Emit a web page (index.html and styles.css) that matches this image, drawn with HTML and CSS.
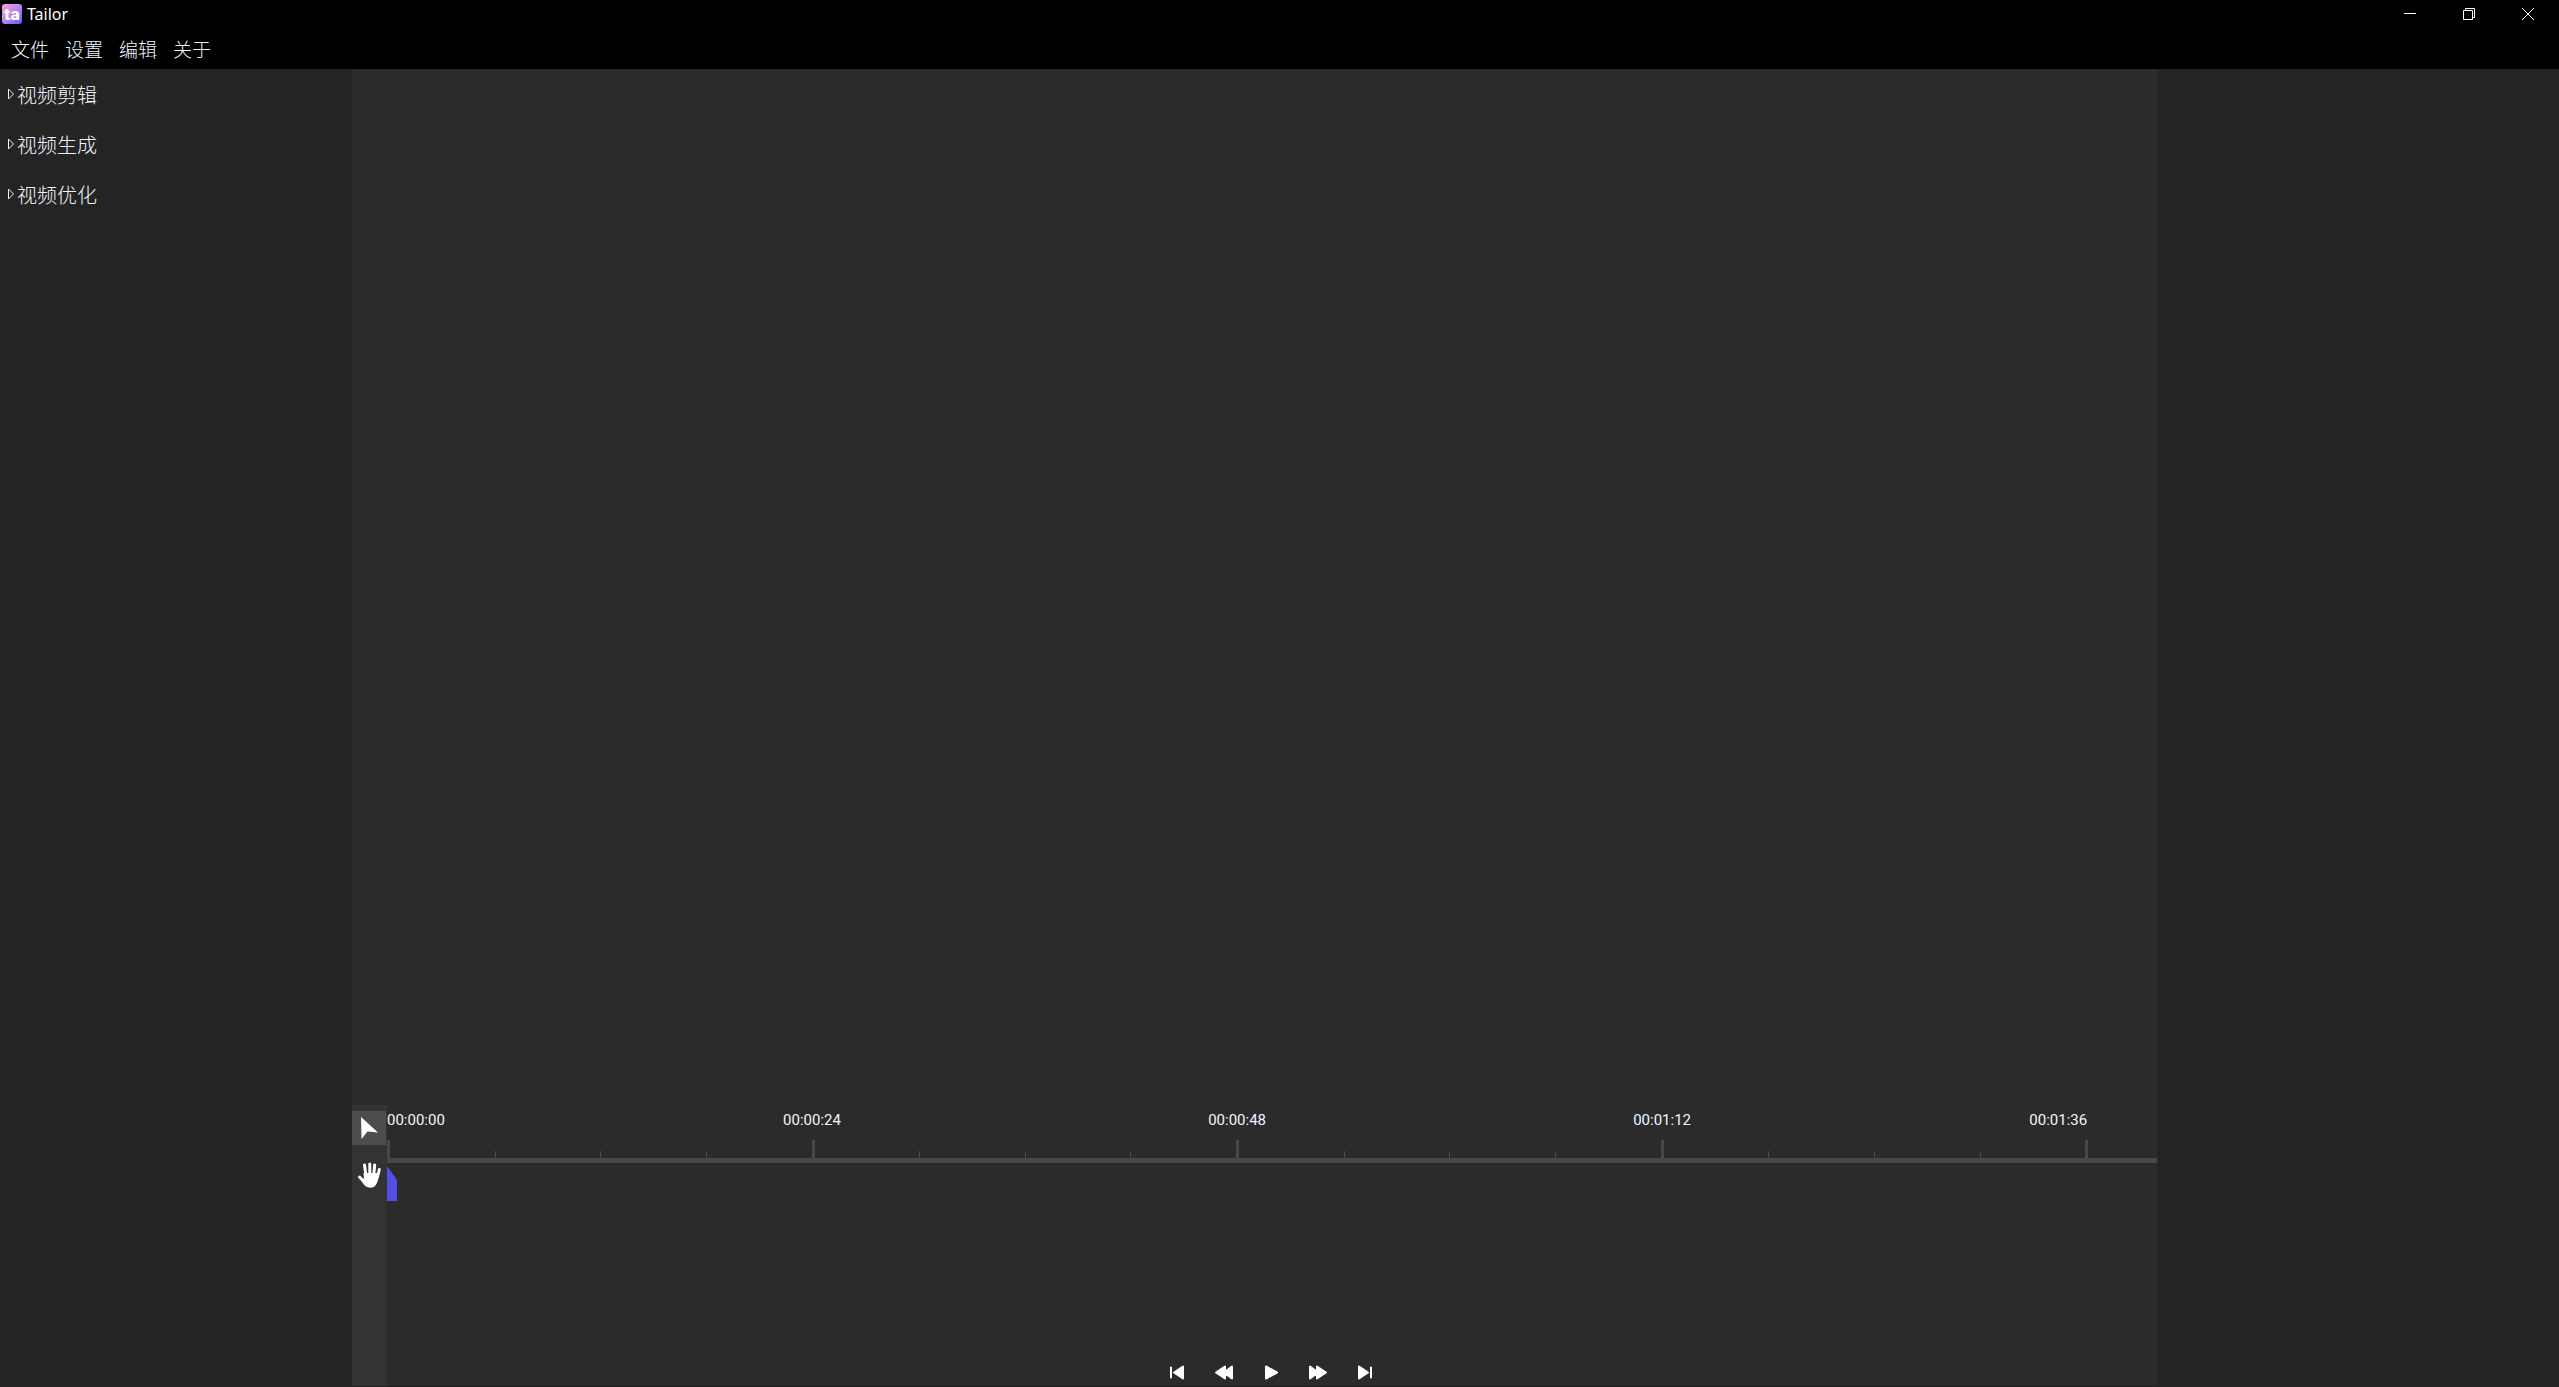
FILE: index.html
```
<!DOCTYPE html>
<html lang="zh-CN">
<head>
    <meta charset="UTF-8">
    <meta name="viewport" content="width=device-width, initial-scale=1.0">
    <title>Tailor</title>
    <link rel="stylesheet" href="styles.css">
</head>
<body>
    <header>
        <div class="title-bar">
            <svg class="logo" viewBox="0 0 20 20">
                <defs>
                    <linearGradient id="logo-bg" x1="0" y1="0" x2="1" y2="1">
                        <stop offset="0" stop-color="#ff9ddf"/>
                        <stop offset="0.5" stop-color="#b886f2"/>
                        <stop offset="1" stop-color="#5a5cf0"/>
                    </linearGradient>
                </defs>
                <rect width="20" height="20" rx="3" fill="url(#logo-bg)"/>
                <text x="10" y="16" text-anchor="middle">ta</text>
            </svg>
            <span class="app-name">Tailor</span>
            <div class="window-buttons">
                <button aria-label="最小化">
                    <svg width="12" height="12" viewBox="0 0 12 12"><path d="M0 5.5h12"/></svg>
                </button>
                <button aria-label="还原">
                    <svg width="12" height="12" viewBox="0 0 12 12"><path d="M.5 2.5h9v9h-9zM2.500 2.500v-2h9v9h-2"/></svg>
                </button>
                <button aria-label="关闭">
                    <svg width="12" height="12" viewBox="0 0 12 12"><path d="M0 0l12 12M12 0L0 12"/></svg>
                </button>
            </div>
        </div>
        <nav class="menu-bar">
            <button>文件</button>
            <button>设置</button>
            <button>编辑</button>
            <button>关于</button>
        </nav>
    </header>

    <main>
        <!-- 功能列表 -->
        <aside class="sidebar">
            <details>
                <summary><svg width="6" height="12" viewBox="0 0 6 12"><path d="M.5 1v10l5-5z"/></svg>视频剪辑</summary>
            </details>
            <details>
                <summary><svg width="6" height="12" viewBox="0 0 6 12"><path d="M.5 1v10l5-5z"/></svg>视频生成</summary>
            </details>
            <details>
                <summary><svg width="6" height="12" viewBox="0 0 6 12"><path d="M.5 1v10l5-5z"/></svg>视频优化</summary>
            </details>
        </aside>

        <section class="workspace">
            <div class="preview"></div>

            <div class="editor">
                <div class="tools">
                    <button class="active" aria-label="选择">
                        <svg width="34" height="34" viewBox="0 0 34 34"><path d="M9 6l17 15.500-10.500-1L9.500 28z"/></svg>
                    </button>
                    <button aria-label="拖动">
                        <svg width="34" height="34" viewBox="0 0 34 34">
                            <path class="fingers" d="M12.500 7l1.500 11M17.800 6v11M22.700 7l-1 10M27.300 11.500l-2 8M7.500 19l5 5"/>
                            <path d="M11.500 15h13.500l1.500 4c-.5 4-1.500 7-4 9.500-1.500 1.500-6.500 1.500-8.500 0-2.500-2-4-4.500-5.500-7l3.500-1z"/>
                        </svg>
                    </button>
                </div>

                <!-- 时间轴 -->
                <div class="timeline">
                    <div class="time-labels">
                        <span>00:00:00</span>
                        <span>00:00:24</span>
                        <span>00:00:48</span>
                        <span>00:01:12</span>
                        <span>00:01:36</span>
                    </div>
                    <div class="ruler">
                        <i class="major"></i><i></i><i></i><i></i>
                        <i class="major"></i><i></i><i></i><i></i>
                        <i class="major"></i><i></i><i></i><i></i>
                        <i class="major"></i><i></i><i></i><i></i>
                        <i class="major last"></i>
                    </div>
                    <div class="playhead"></div>
                    <div class="controls">
                        <button aria-label="开头">
                            <svg width="20" height="20" viewBox="0 0 20 20"><path d="M4 4.500v10M16 3.500v12L7 9.500z"/></svg>
                        </button>
                        <button aria-label="快退">
                            <svg width="20" height="20" viewBox="0 0 20 20"><path d="M11 3.500v12L2 9.500zM18 3.500v12L10 9.500z"/></svg>
                        </button>
                        <button aria-label="播放">
                            <svg width="20" height="20" viewBox="0 0 20 20"><path d="M5 3.500v12l11-6z"/></svg>
                        </button>
                        <button aria-label="快进">
                            <svg width="20" height="20" viewBox="0 0 20 20"><path d="M2 3.500v12l8-6zM9 3.500v12l9-6z"/></svg>
                        </button>
                        <button aria-label="结尾">
                            <svg width="20" height="20" viewBox="0 0 20 20"><path d="M4 3.500v12l9-6zM16 4.500v10"/></svg>
                        </button>
                    </div>
                </div>
            </div>
        </section>

        <aside class="properties"></aside>
    </main>
</body>
</html>
```
FILE: styles.css
```
* {
    box-sizing: border-box;
}

body {
    display: flex;
    flex-direction: column;
    height: 100vh;
    margin: 0;
    background-color: #242424;
    color: #f0f5fc;
    font-family: "Noto Sans", "Noto Sans CJK SC", sans-serif;
    overflow: hidden;
}

button {
    padding: 0;
    border: none;
    background: none;
    color: inherit;
    font-family: inherit;
}

svg {
    display: block;
    flex: none;
}

header {
    background-color: #000000;
}

.title-bar {
    display: flex;
    align-items: center;
    height: 28px;
    padding: 0 2px;
}

.logo {
    width: 20px;
    height: 20px;
}

.logo text {
    font: 800 16px Inter, sans-serif;
    fill: #ffffff;
}

.app-name {
    margin-left: 5px;
    color: #ffffff;
    font-size: 16px;
    line-height: 28px;
}

.window-buttons {
    display: flex;
    height: 28px;
    margin-left: auto;
}

.window-buttons button {
    display: flex;
    align-items: center;
    justify-content: center;
    width: 59px;
}

.window-buttons path {
    fill: none;
    stroke: #ffffff;
}

.menu-bar {
    display: flex;
    gap: 16px;
    height: 41px;
    padding: 7px 11px;
}

.menu-bar button {
    font-family: "Noto Sans CJK SC", sans-serif;
    font-size: 19px;
    font-weight: 300;
    line-height: 28px;
}

main {
    display: flex;
    flex: 1;
    min-height: 0;
}

.sidebar {
    width: 352px;
}

.sidebar summary {
    display: flex;
    align-items: center;
    gap: 3px;
    height: 50px;
    padding-left: 8px;
    font-family: "Noto Sans CJK SC", sans-serif;
    font-size: 20px;
    font-weight: 300;
}

.sidebar path {
    fill: none;
    stroke: #f0f5fc;
}

.properties {
    width: 401px;
}

.workspace {
    display: flex;
    flex: 1;
    flex-direction: column;
    background-color: #2b2b2b;
}

.preview {
    flex: 1;
}

.editor {
    display: flex;
    height: 282px;
    border-bottom: 1px solid #202020;
}

.tools {
    display: flex;
    flex-direction: column;
    gap: 13px;
    width: 35px;
    padding-top: 6px;
    background-color: #333333;
}

.tools button {
    width: 34px;
    height: 34px;
}

.tools .active {
    background-color: #4d4d4d;
}

.tools path {
    fill: #ffffff;
}

.tools .fingers {
    fill: none;
    stroke: #ffffff;
    stroke-width: 3;
    stroke-linecap: round;
}

.timeline {
    display: flex;
    flex: 1;
    flex-direction: column;
}

.time-labels {
    display: grid;
    grid-template-columns: 1fr 2fr 2fr 2fr 1fr;
    height: 35px;
    padding: 5px 4% 0 0;
    font-family: Roboto, sans-serif;
    font-size: 15px;
    line-height: 20px;
    text-align: center;
}

.time-labels span:first-child {
    text-align: left;
}

.time-labels span:last-child {
    text-align: right;
}

.ruler {
    display: flex;
    align-items: flex-end;
    height: 23px;
    margin-right: 1px;
    padding-right: calc(4% - 2px);
    border-bottom: 5px solid #484848;
}

.ruler i {
    flex: 1 1 0;
    height: 7px;
    border-left: 1px solid #484848;
}

.ruler .major {
    height: 18px;
    border-left-width: 3px;
}

.ruler .last {
    flex: none;
    width: 3px;
}

.playhead {
    width: 10px;
    height: 35px;
    margin-top: 3px;
    background-color: #5050e6;
    clip-path: polygon(0 0, 100% 40%, 100% 100%, 0 100%);
}

.controls {
    display: flex;
    justify-content: center;
    gap: 27px;
    margin-top: auto;
    padding: 0 3px 3px 0;
}

.controls path {
    fill: #ffffff;
    stroke: #ffffff;
    stroke-width: 2;
    stroke-linecap: round;
    stroke-linejoin: round;
}
```
